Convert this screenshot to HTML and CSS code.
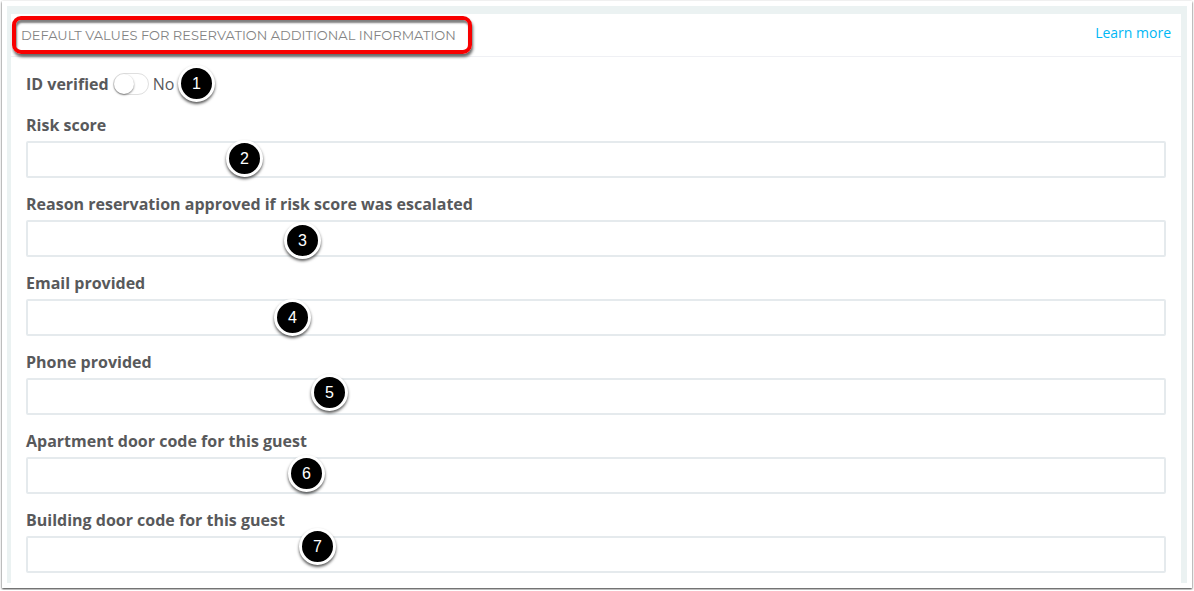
FILE: index.html
```html
<!DOCTYPE html>
<html lang="en">
<head>
<meta charset="utf-8">
<title>Default values for reservation additional information</title>
<link rel="stylesheet" href="styles.css">
</head>
<body>
<main class="window">
  <section class="panel">
    <header class="panel-header">
      <h1 class="panel-title">DEFAULT VALUES FOR RESERVATION ADDITIONAL INFORMATION</h1>
      <a class="learn-more" href="#">Learn more</a>
    </header>
    <form class="panel-body">
      <div class="toggle-row">
        <label class="label" for="id-verified">ID verified</label>
        <input class="switch" type="checkbox" role="switch" id="id-verified">
        <span class="switch-text">No</span>
        <span class="marker marker-1">1</span>
      </div>
      <div class="field">
        <label class="label" for="risk">Risk score</label>
        <input class="input" type="text" id="risk">
        <span class="marker marker-2">2</span>
      </div>
      <div class="field">
        <label class="label" for="reason">Reason reservation approved if risk score was escalated</label>
        <input class="input" type="text" id="reason">
        <span class="marker marker-3">3</span>
      </div>
      <div class="field">
        <label class="label" for="email">Email provided</label>
        <input class="input" type="text" id="email">
        <span class="marker marker-4">4</span>
      </div>
      <div class="field">
        <label class="label" for="phone">Phone provided</label>
        <input class="input" type="text" id="phone">
        <span class="marker marker-5">5</span>
      </div>
      <div class="field">
        <label class="label" for="apartment">Apartment door code for this guest</label>
        <input class="input" type="text" id="apartment">
        <span class="marker marker-6">6</span>
      </div>
      <div class="field">
        <label class="label" for="building">Building door code for this guest</label>
        <input class="input" type="text" id="building">
        <span class="marker marker-7">7</span>
      </div>
    </form>
  </section>
</main>
</body>
</html>
```
FILE: styles.css
```css
* {
  box-sizing: border-box;
}

body {
  margin: 0;
  background: #fff;
  color: #58595b;
  font: 16px/22px "Open Sans", "Noto Sans", sans-serif;
}

.window {
  margin: 1px 2px 2px;
  padding: 5px;
  background: #fff;
  box-shadow: 0 1px 2px rgba(0, 0, 0, 0.8);
}

.panel {
  border: solid #ebf2f2;
  border-width: 8px 6px 0 4px;
}

.panel-header {
  display: flex;
  align-items: flex-start;
  justify-content: space-between;
  height: 43px;
  padding-right: 10px;
  border-bottom: 1px solid #eff0f4;
}

.panel-title {
  margin: 2px 0 0 1px;
  padding: 4px 12px 4px 5px;
  border: 4px solid #f80000;
  border-radius: 9px;
  box-shadow: 1px 3px 3px rgba(0, 0, 0, 0.6), inset 1px 3px 2px rgba(0, 0, 0, 0.5);
  color: #838383;
  font: 400 13px/22px Montserrat, Inter, sans-serif;
}

.learn-more {
  margin-top: 8px;
  color: #00b7f5;
  font-size: 14px;
  text-decoration: none;
}

.panel-body {
  display: flex;
  flex-direction: column;
  gap: 15px;
  padding: 16px 15px 10px;
}

.toggle-row {
  position: relative;
  display: flex;
  align-items: center;
  gap: 4px;
  margin-bottom: 4px;
}

.field {
  position: relative;
  display: flex;
  flex-direction: column;
  gap: 5px;
}

.label {
  font-weight: 700;
}

.switch {
  appearance: none;
  display: flex;
  width: 36px;
  height: 22px;
  margin: 0;
  border: 1px solid #dfdfdf;
  border-radius: 11px;
  background: #fff;
}

.switch::before {
  content: "";
  width: 20px;
  height: 20px;
  border-radius: 50%;
  background: #fff;
  box-shadow: 0 1px 2px rgba(0, 0, 0, 0.5);
}

.input {
  width: 100%;
  height: 37px;
  padding: 6px 12px;
  border: 2px solid #e5eaed;
  border-radius: 2px;
  background: #fff;
  color: inherit;
  font: inherit;
}

.marker {
  position: absolute;
  width: 37px;
  height: 37px;
  border: 3px solid #fff;
  border-radius: 50%;
  background: #000;
  box-shadow: 0 2px 3px rgba(0, 0, 0, 0.65);
  color: #fff;
  font: 16px/31px "Liberation Sans", Arial, sans-serif;
  text-align: center;
}

.marker-1 { left: 152px; top: -8px; }
.marker-2 { left: 200px; top: 26px; }
.marker-3 { left: 258px; top: 29px; }
.marker-4 { left: 248px; top: 27px; }
.marker-5 { left: 285px; top: 23px; }
.marker-6 { left: 262px; top: 25px; }
.marker-7 { left: 273px; top: 19px; }
```
